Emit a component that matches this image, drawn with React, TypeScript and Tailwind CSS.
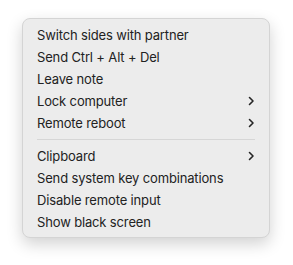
function Chevron() {
  return (
    <svg width="7" height="10" viewBox="0 0 7 10" fill="none">
      <path d="M1.5 1.5 L5 5 L1.5 8.5" stroke="#262626" strokeWidth="1.6" strokeLinecap="round" strokeLinejoin="round" />
    </svg>
  );
}

const top = [
  { label: "Switch sides with partner" },
  { label: "Send Ctrl + Alt + Del" },
  { label: "Leave note" },
  { label: "Lock computer", sub: true },
  { label: "Remote reboot", sub: true },
];

const bottom = [
  { label: "Clipboard", sub: true },
  { label: "Send system key combinations" },
  { label: "Disable remote input" },
  { label: "Show black screen" },
];

function Row({ label, sub }: { label: string; sub?: boolean }) {
  return (
    <div className="h-[22px] flex items-center justify-between pl-[14px] pr-[14px]">
      <span className="pt-[2px]">{label}</span>
      {sub && <Chevron />}
    </div>
  );
}

export default function App() {
  return (
    <div className="w-[293px] h-[265px] bg-white pt-[18px] pl-[22px]">
      <div
        className="w-[248px] h-[220px] bg-[#ececec] rounded-[8px] border border-[#d4d4d4] shadow-[0_6px_16px_rgba(0,0,0,0.18)] pt-[5px] text-[13px] tracking-[-0.15px] text-[#222222]"
        style={{ fontFamily: "Inter, 'Noto Sans', sans-serif" }}
      >
        {top.map((r) => (
          <Row key={r.label} {...r} />
        ))}
        <div className="py-[5px] px-[14px]">
          <div className="h-px bg-[#d6d6d6]" />
        </div>
        {bottom.map((r) => (
          <Row key={r.label} {...r} />
        ))}
      </div>
    </div>
  );
}
